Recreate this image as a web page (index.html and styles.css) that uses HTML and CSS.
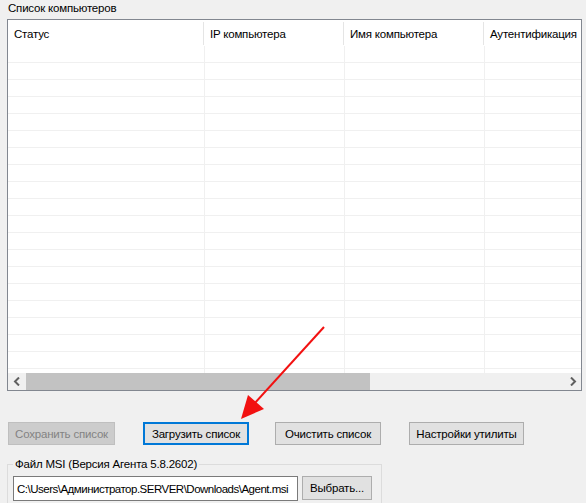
FILE: index.html
```html
<!DOCTYPE html>
<html>
<head>
  <title>Список компьютеров</title>
  <link rel="stylesheet" href="styles.css">
</head>
<body>
  <div class="window">
    <div class="caption">Список компьютеров</div>

    <div class="listview">
      <div class="lv-header">
        <div class="lv-col col-status">Статус</div>
        <div class="lv-col col-ip">IP компьютера</div>
        <div class="lv-col col-name">Имя компьютера</div>
        <div class="lv-col col-auth">Аутентификация</div>
      </div>
      <div class="lv-body" id="lv-body">
        <!-- строки добавляются скриптом -->
      </div>
      <div class="hscroll">
        <div class="sb-btn">
          <svg width="8" height="9" viewBox="0 0 8 9"><path d="M6 0.5 L2 4.5 L6 8.5" fill="none" stroke="#606060" stroke-width="2"/></svg>
        </div>
        <div class="sb-track">
          <div class="sb-thumb"></div>
        </div>
        <div class="sb-btn">
          <svg width="8" height="9" viewBox="0 0 8 9"><path d="M2 0.5 L6 4.5 L2 8.5" fill="none" stroke="#606060" stroke-width="2"/></svg>
        </div>
      </div>
    </div>

    <div class="buttons">
      <button class="btn btn-save" disabled>Сохранить список</button>
      <button class="btn btn-load is-default">Загрузить список</button>
      <button class="btn btn-clear">Очистить список</button>
      <button class="btn btn-settings">Настройки утилиты</button>
    </div>

    <fieldset class="msi-group">
      <legend>Файл MSI (Версия Агента 5.8.2602)</legend>
      <div class="msi-row">
        <input type="text" class="msi-path" value="C:\Users\Администратор.SERVER\Downloads\Agent.msi">
        <button class="btn btn-browse">Выбрать...</button>
      </div>
    </fieldset>

    <svg class="pointer" width="586" height="503" viewBox="0 0 586 503">
      <line x1="324" y1="327" x2="253" y2="405" stroke="#f21111" stroke-width="2"/>
      <polygon points="241,419 248,395 264,409" fill="#f21111"/>
    </svg>
  </div>

  <script>
    // пустые строки списка с сеткой
    var body = document.getElementById("lv-body");
    for (var i = 0; i < 20; i++) {
      var row = document.createElement("div");
      row.className = "lv-row";
      ["col-status", "col-ip", "col-name", "col-auth"].forEach(function(c) {
        var cell = document.createElement("div");
        cell.className = "lv-cell " + c;
        row.appendChild(cell);
      });
      body.appendChild(row);
    }
  </script>
</body>
</html>
```

FILE: styles.css
```css
body {
  margin: 0;
  padding: 0;
  background: #f0f0f0;
  font-family: "Liberation Sans", Arial, sans-serif;
  font-size: 11.5px;
  letter-spacing: -0.2px;
  color: #000;
  overflow: hidden;
}

.window {
  position: relative;
  width: 586px;
  height: 503px;
  padding-left: 7px;
  box-sizing: border-box;
}

.caption {
  height: 19px;
  padding: 1px 0 0 1px;
  line-height: 15px;
  box-sizing: border-box;
}

/* список */
.listview {
  width: 575px;
  height: 372px;
  border: 1px solid #828790;
  background: #fff;
  box-sizing: border-box;
  display: flex;
  flex-direction: column;
  overflow: hidden;
}

.lv-header {
  display: flex;
  height: 26px;
  flex-shrink: 0;
}

.lv-col {
  padding: 7px 0 0 6px;
  line-height: 15px;
  box-sizing: border-box;
  white-space: nowrap;
  position: relative;
}

.lv-col::after {
  content: "";
  position: absolute;
  right: 0;
  top: 2px;
  bottom: 1px;
  width: 1px;
  background: #e5e5e5;
}

.col-status { width: 196px; flex-shrink: 0; }
.col-ip { width: 140px; flex-shrink: 0; }
.col-name { width: 140px; flex-shrink: 0; }
.col-auth { width: 140px; flex-shrink: 0; }

.lv-body {
  flex: 1;
  overflow: hidden;
}

.lv-row {
  display: flex;
  height: 17px;
  border-bottom: 1px solid #f0f0f0;
  box-sizing: border-box;
}

.lv-cell {
  border-right: 1px solid #f0f0f0;
  box-sizing: border-box;
}

.lv-cell.col-status { width: 197px; }
.lv-cell.col-ip { width: 140px; }

/* горизонтальная прокрутка */
.hscroll {
  display: flex;
  height: 17px;
  flex-shrink: 0;
  background: #f0f0f0;
}

.sb-btn {
  width: 17px;
  display: flex;
  align-items: center;
  justify-content: center;
  flex-shrink: 0;
}

.sb-track {
  flex: 1;
  padding-left: 1px;
}

.sb-thumb {
  width: 344px;
  height: 100%;
  background: #c2c2c2;
}

/* кнопки */
.buttons {
  display: flex;
  margin-top: 31px;
  padding-left: 1px;
}

.btn {
  height: 23px;
  padding: 0;
  border: 1px solid #adadad;
  background: #e1e1e1;
  font-family: inherit;
  font-size: 11.5px;
  letter-spacing: -0.2px;
  color: #000;
  box-sizing: border-box;
}

.btn:disabled {
  background: #cccccc;
  border-color: #bfbfbf;
  color: #838383;
}

.btn.is-default {
  border: 2px solid #0078d7;
}

.btn-save { width: 107px; }
.btn-load { width: 106px; margin-left: 28px; }
.btn-clear { width: 106px; margin-left: 26px; }
.btn-settings { width: 115px; margin-left: 28px; }

/* файл MSI */
.msi-group {
  width: 375px;
  margin: 12px 0 0 0;
  padding: 4px 5px 10px 5px;
  border: 1px solid #dcdcdc;
  box-sizing: border-box;
}

.msi-group legend {
  padding: 0 2px;
  line-height: 15px;
}

.msi-row {
  display: flex;
}

.msi-path {
  width: 285px;
  height: 25px;
  padding: 0 2px 0 3px;
  border: 1px solid #7a7a7a;
  background: #fff;
  font-family: inherit;
  font-size: 11.5px;
  letter-spacing: -0.5px;
  box-sizing: border-box;
}

.btn-browse {
  width: 70px;
  height: 24px;
  margin-left: 4px;
}

.pointer {
  position: absolute;
  left: 0;
  top: 0;
  pointer-events: none;
}
```
